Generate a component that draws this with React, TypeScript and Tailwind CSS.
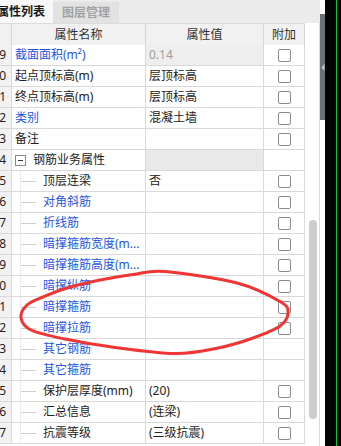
import React from "react";

type Row = {
  n: string;
  name: string;
  blue?: boolean;
  value?: string;
  ro?: boolean;
  check?: boolean;
  group?: boolean;
  child?: boolean;
};

const rows: Row[] = [
  { n: "19", name: "截面面积(m²)", blue: true, value: "0.14", ro: true, check: true },
  { n: "20", name: "起点顶标高(m)", value: "层顶标高", check: true },
  { n: "21", name: "终点顶标高(m)", value: "层顶标高", check: true },
  { n: "22", name: "类别", blue: true, value: "混凝土墙", check: true },
  { n: "23", name: "备注", check: true },
  { n: "24", name: "钢筋业务属性", group: true },
  { n: "25", name: "顶层连梁", child: true, value: "否", check: true },
  { n: "26", name: "对角斜筋", child: true, blue: true, check: true },
  { n: "27", name: "折线筋", child: true, blue: true, check: true },
  { n: "28", name: "暗撑箍筋宽度(m...", child: true, blue: true, check: true },
  { n: "29", name: "暗撑箍筋高度(m...", child: true, blue: true, check: true },
  { n: "30", name: "暗撑纵筋", child: true, blue: true, check: true },
  { n: "31", name: "暗撑箍筋", child: true, blue: true, check: true },
  { n: "32", name: "暗撑拉筋", child: true, blue: true, check: true },
  { n: "33", name: "其它钢筋", child: true, blue: true },
  { n: "34", name: "其它箍筋", child: true, blue: true },
  { n: "35", name: "保护层厚度(mm)", child: true, value: "(20)", check: true },
  { n: "36", name: "汇总信息", child: true, value: "(连梁)", check: true },
  { n: "37", name: "抗震等级", child: true, value: "(三级抗震)", check: true },
];

// hand drawn red ring
const ring: [number, number][] = [
  [165, 271.5], [237, 283], [280, 301.5], [288, 312.5], [280, 326], [253, 338],
  [218, 348], [175, 353.5], [112, 347], [65, 339], [31, 330], [21, 318],
  [27, 305], [43, 297], [67, 288], [100, 280], [133, 274.5],
];

function ringPath(p: [number, number][]) {
  const k = p.length;
  let d = `M${p[0][0]},${p[0][1]}`;
  for (let i = 0; i < k; i++) {
    const p0 = p[(i - 1 + k) % k];
    const p1 = p[i];
    const p2 = p[(i + 1) % k];
    const p3 = p[(i + 2) % k];
    const c1x = p1[0] + (p2[0] - p0[0]) / 6;
    const c1y = p1[1] + (p2[1] - p0[1]) / 6;
    const c2x = p2[0] - (p3[0] - p1[0]) / 6;
    const c2y = p2[1] - (p3[1] - p1[1]) / 6;
    d += ` C${c1x.toFixed(1)},${c1y.toFixed(1)} ${c2x.toFixed(1)},${c2y.toFixed(1)} ${p2[0]},${p2[1]}`;
  }
  return d + " Z";
}

function Check() {
  return <span className="w-[13px] h-[13px] border border-[#8c8c8c] rounded-[2px] bg-white" />;
}

function TableRow({ r }: { r: Row }) {
  return (
    <div className="grid grid-cols-[12px_134px_118px_41px] h-[21px] leading-[20px]">
      <div className="flex justify-end overflow-hidden whitespace-nowrap bg-[#f2f2f2] border-r border-b border-[#d9d9d9] pr-[5px] text-[#222]">
        {r.n}
      </div>
      <div
        className={`flex items-center overflow-hidden whitespace-nowrap bg-white border-r border-b border-[#d9d9d9] ${
          r.blue ? "text-[#2456e0]" : "text-[#222]"
        }`}
      >
        {r.group ? (
          <>
            <span className="ml-[3px] w-[11px] h-[11px] border border-[#8c8c8c] flex items-center justify-center bg-white">
              <span className="w-[5px] h-px bg-[#333]" />
            </span>
            <span className="ml-[7px]">{r.name}</span>
          </>
        ) : r.child ? (
          <>
            <span className="w-[8px]" />
            <span className="self-stretch w-px bg-[#ececec]" />
            <span className="w-[15px] h-px bg-[#d0d0d0]" />
            <span className="ml-[7px]">{r.name}</span>
          </>
        ) : (
          <span className="ml-[3px]">{r.name}</span>
        )}
      </div>
      <div
        className={`overflow-hidden whitespace-nowrap border-r border-b border-[#d9d9d9] pl-[3px] ${
          r.ro ? "bg-[#eeeeee] text-[#a0a0a0]" : r.group ? "bg-[#e9e9e9]" : "bg-white text-[#222]"
        }`}
      >
        {r.value}
      </div>
      <div className="flex items-center justify-center bg-white border-r border-b border-[#d9d9d9]">
        {r.check && <Check />}
      </div>
    </div>
  );
}

export default function App() {
  return (
    <div className="relative w-[341px] h-[446px] overflow-hidden flex bg-white text-[12px] font-['Noto_Sans','Noto_Sans_CJK_SC',sans-serif]">
      <div className="w-[320px] flex flex-col">
        <div className="h-[23px] flex bg-[#ececec] font-bold">
          <div className="w-[53px] bg-[#f8f8f8] flex items-center overflow-hidden whitespace-nowrap">
            <span className="-ml-[3px] text-[#1a1a1a]">属性列表</span>
          </div>
          <div className="w-[66px] mt-[2px] bg-[#e2e2e2] flex items-center justify-center text-[#a3a3a3]">
            图层管理
          </div>
        </div>
        <div className="flex flex-1">
          <div className="w-[305px] flex flex-col">
            <div className="grid grid-cols-[12px_134px_118px_41px] h-[22px] leading-[21px] bg-[#f1f1f1] text-[#333] border-t border-[#dcdcdc]">
              <div className="border-r border-b border-[#d6d6d6]" />
              <div className="text-center border-r border-b border-[#d6d6d6]">属性名称</div>
              <div className="text-center border-r border-b border-[#d6d6d6]">属性值</div>
              <div className="text-center border-r border-b border-[#d6d6d6]">附加</div>
            </div>
            {rows.map((r) => (
              <TableRow key={r.n} r={r} />
            ))}
          </div>
          <div className="w-[15px] border-r border-[#dadada] bg-white">
            <div className="ml-[4px] mt-[197px] w-[8px] h-[199px] rounded-[4px] bg-[#cdcdcd]" />
          </div>
        </div>
      </div>
      <div className="w-[5px] flex flex-col bg-white">
        <div className="h-[14px]" />
        <div className="h-[106px] bg-[#6c7077] flex items-center justify-center">
          <svg width="4" height="7" viewBox="0 0 4 7">
            <polygon points="3.5,0 0.5,3.5 3.5,7" fill="#c4c7cb" />
          </svg>
        </div>
      </div>
      <div className="w-[16px] bg-[#030303] pl-[11px]">
        <div className="w-px h-full bg-[#1cc31c]" />
      </div>
      <svg className="absolute inset-0 pointer-events-none" width="341" height="446" viewBox="0 0 341 446">
        <path d={ringPath(ring)} fill="none" stroke="#ef3535" strokeWidth="3" strokeLinejoin="round" />
      </svg>
    </div>
  );
}
